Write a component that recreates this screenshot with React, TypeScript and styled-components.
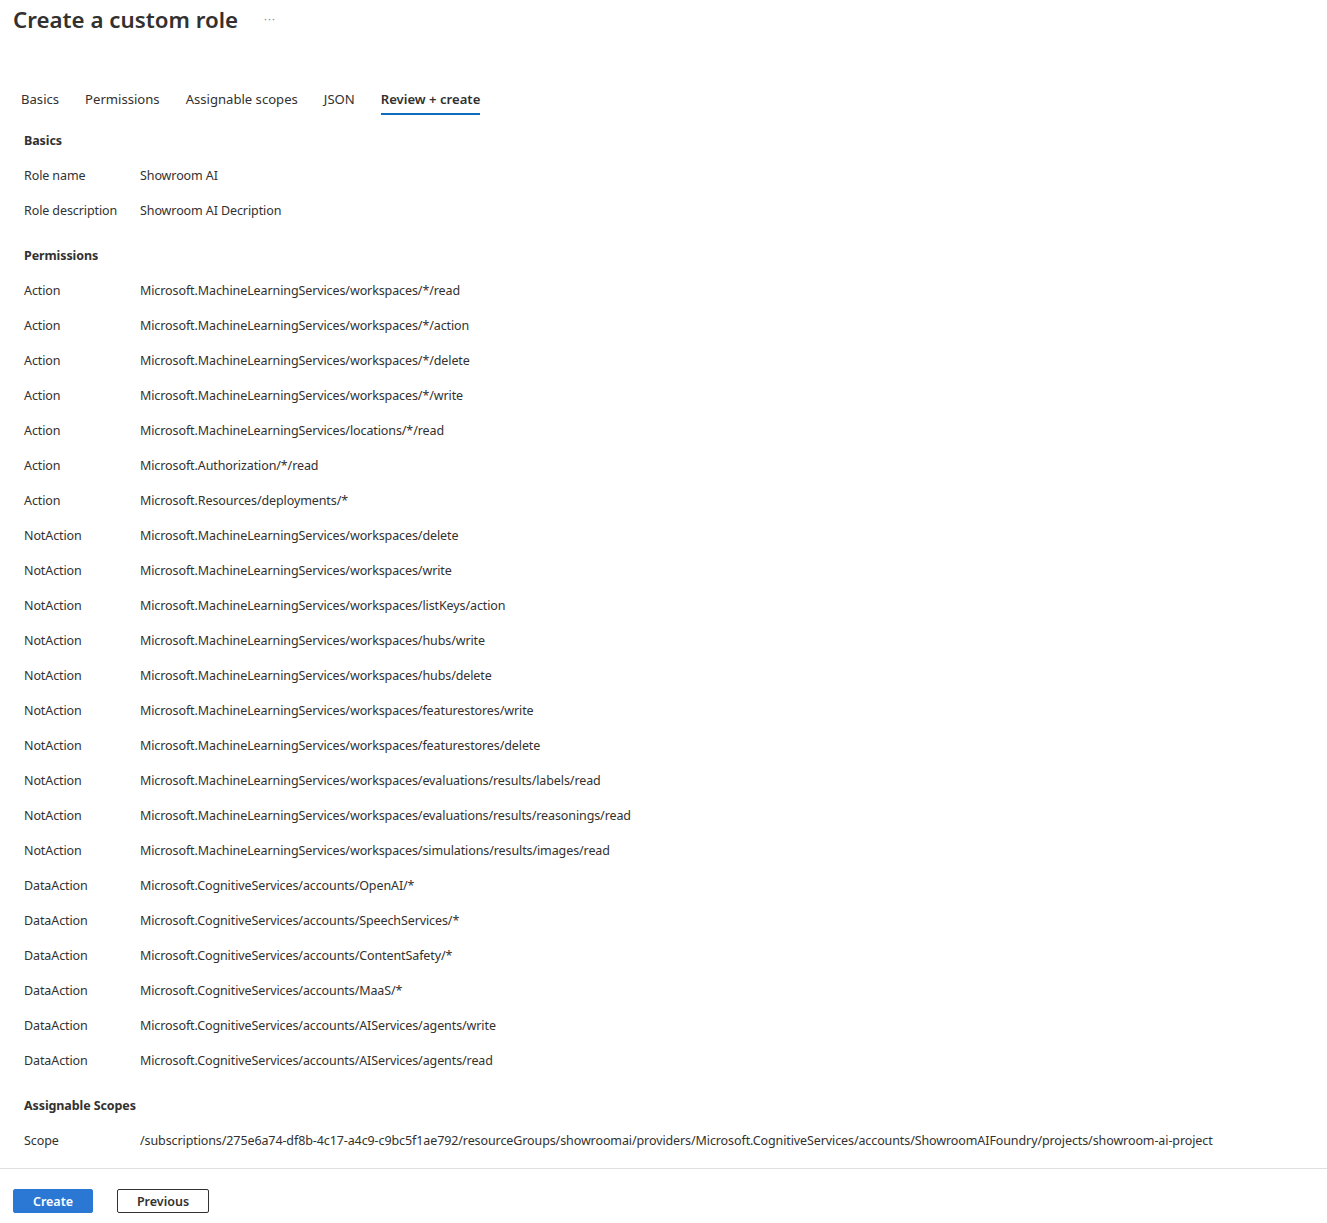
import React from 'react';
import styled, { createGlobalStyle } from 'styled-components';

const GlobalStyle = createGlobalStyle`
  body {
    margin: 0;
    background: #ffffff;
    font-family: "Segoe UI", "Noto Sans", "Open Sans", sans-serif;
    color: #323130;
  }
`;

const Page = styled.div`
  width: 1327px;
  min-height: 1223px;
  background: #fff;
`;

const Header = styled.div`
  height: 40px;
  display: flex;
  align-items: center;
  padding-left: 13px;
`;

const Title = styled.h1`
  margin: 0;
  font-size: 22.3px;
  font-weight: 600;
  line-height: 32px;
  color: #323130;
`;

const More = styled.span`
  margin-left: 26px;
  font-size: 11px;
  color: #8a8886;
  letter-spacing: 1px;
  position: relative;
  top: -2px;
`;

const TabBar = styled.div`
  display: flex;
  gap: 26px;
  margin-top: 40px;
  padding-left: 21px;
`;

const Tab = styled.div<{ $active?: boolean }>`
  font-size: 13.1px;
  line-height: 20px;
  padding: 9px 0 4px;
  font-weight: ${(p) => (p.$active ? 600 : 400)};
  color: #323130;
  border-bottom: 2px solid ${(p) => (p.$active ? '#0f6cbd' : 'transparent')};
`;

const Content = styled.div`
  padding: 8px 24px 10px;
`;

const Section = styled.section`
  margin-bottom: 10px;
  &:last-child {
    margin-bottom: 0;
  }
`;

const SectionTitle = styled.div`
  height: 35px;
  display: flex;
  align-items: center;
  font-size: 12.5px;
  font-weight: 700;
  letter-spacing: -0.1px;
`;

const Row = styled.div`
  height: 35px;
  display: grid;
  grid-template-columns: 116px 1fr;
  align-items: center;
  font-size: 12.5px;
  letter-spacing: -0.1px;
`;

const Label = styled.span`
  color: #323130;
`;

const Value = styled.span`
  color: #323130;
  white-space: nowrap;
`;

const Footer = styled.div`
  border-top: 1px solid #e1dfdd;
  padding: 20px 13px 0;
  display: flex;
  gap: 24px;
`;

const Button = styled.button<{ $primary?: boolean }>`
  height: 24px;
  width: ${(p) => (p.$primary ? '80px' : '92px')};
  padding: 0;
  font-family: inherit;
  font-size: 12.5px;
  font-weight: 600;
  border-radius: 2px;
  border: 1px solid ${(p) => (p.$primary ? '#2b78d4' : '#323130')};
  background: ${(p) => (p.$primary ? '#2b78d4' : '#ffffff')};
  color: ${(p) => (p.$primary ? '#ffffff' : '#323130')};
  cursor: pointer;
`;

const tabs = ['Basics', 'Permissions', 'Assignable scopes', 'JSON', 'Review + create'];

const permissions: [string, string][] = [
  ['Action', 'Microsoft.MachineLearningServices/workspaces/*/read'],
  ['Action', 'Microsoft.MachineLearningServices/workspaces/*/action'],
  ['Action', 'Microsoft.MachineLearningServices/workspaces/*/delete'],
  ['Action', 'Microsoft.MachineLearningServices/workspaces/*/write'],
  ['Action', 'Microsoft.MachineLearningServices/locations/*/read'],
  ['Action', 'Microsoft.Authorization/*/read'],
  ['Action', 'Microsoft.Resources/deployments/*'],
  ['NotAction', 'Microsoft.MachineLearningServices/workspaces/delete'],
  ['NotAction', 'Microsoft.MachineLearningServices/workspaces/write'],
  ['NotAction', 'Microsoft.MachineLearningServices/workspaces/listKeys/action'],
  ['NotAction', 'Microsoft.MachineLearningServices/workspaces/hubs/write'],
  ['NotAction', 'Microsoft.MachineLearningServices/workspaces/hubs/delete'],
  ['NotAction', 'Microsoft.MachineLearningServices/workspaces/featurestores/write'],
  ['NotAction', 'Microsoft.MachineLearningServices/workspaces/featurestores/delete'],
  ['NotAction', 'Microsoft.MachineLearningServices/workspaces/evaluations/results/labels/read'],
  ['NotAction', 'Microsoft.MachineLearningServices/workspaces/evaluations/results/reasonings/read'],
  ['NotAction', 'Microsoft.MachineLearningServices/workspaces/simulations/results/images/read'],
  ['DataAction', 'Microsoft.CognitiveServices/accounts/OpenAI/*'],
  ['DataAction', 'Microsoft.CognitiveServices/accounts/SpeechServices/*'],
  ['DataAction', 'Microsoft.CognitiveServices/accounts/ContentSafety/*'],
  ['DataAction', 'Microsoft.CognitiveServices/accounts/MaaS/*'],
  ['DataAction', 'Microsoft.CognitiveServices/accounts/AIServices/agents/write'],
  ['DataAction', 'Microsoft.CognitiveServices/accounts/AIServices/agents/read'],
];

const scope =
  '/subscriptions/275e6a74-df8b-4c17-a4c9-c9bc5f1ae792/resourceGroups/showroomai/providers/Microsoft.CognitiveServices/accounts/ShowroomAIFoundry/projects/showroom-ai-project';

export default function App() {
  return (
    <Page>
      <GlobalStyle />
      <Header>
        <Title>Create a custom role</Title>
        <More>···</More>
      </Header>
      <TabBar>
        {tabs.map((t) => (
          <Tab key={t} $active={t === 'Review + create'}>
            {t}
          </Tab>
        ))}
      </TabBar>
      <Content>
        <Section>
          <SectionTitle>Basics</SectionTitle>
          <Row>
            <Label>Role name</Label>
            <Value>Showroom AI</Value>
          </Row>
          <Row>
            <Label>Role description</Label>
            <Value>Showroom AI Decription</Value>
          </Row>
        </Section>
        <Section>
          <SectionTitle>Permissions</SectionTitle>
          {permissions.map(([kind, perm], i) => (
            <Row key={i}>
              <Label>{kind}</Label>
              <Value>{perm}</Value>
            </Row>
          ))}
        </Section>
        <Section>
          <SectionTitle>Assignable Scopes</SectionTitle>
          <Row>
            <Label>Scope</Label>
            <Value>{scope}</Value>
          </Row>
        </Section>
      </Content>
      <Footer>
        <Button $primary>Create</Button>
        <Button>Previous</Button>
      </Footer>
    </Page>
  );
}
